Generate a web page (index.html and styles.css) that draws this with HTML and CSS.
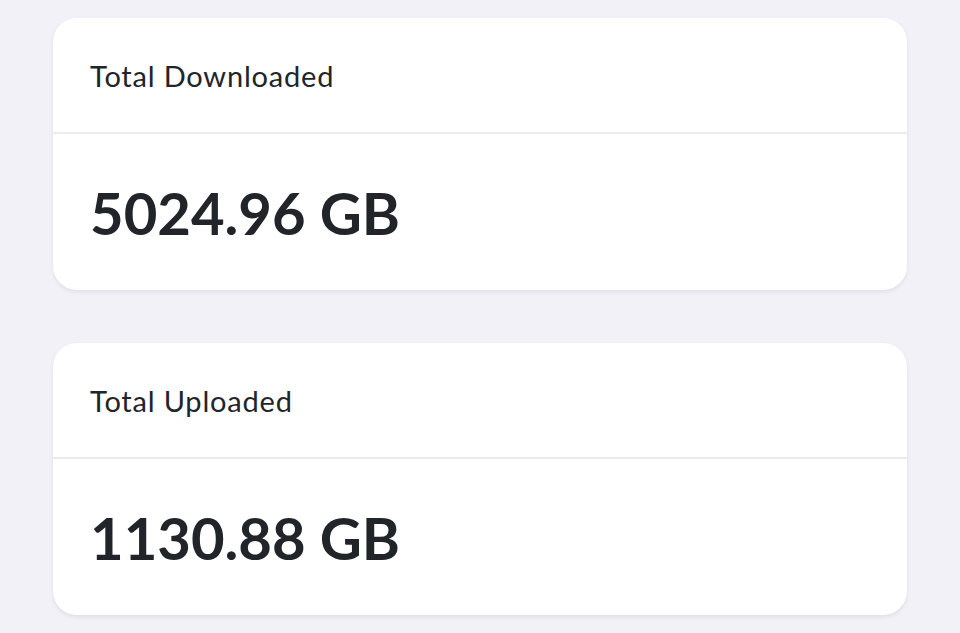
FILE: index.html
```html
<!DOCTYPE html>
<html lang="en">
<head>
  <meta charset="UTF-8">
  <meta name="viewport" content="width=device-width, initial-scale=1.0">
  <title>Transfer Stats</title>
  <link rel="stylesheet" href="styles.css">
</head>
<body>
  <div class="container">
    <div class="card">
      <div class="card-header">Total Downloaded</div>
      <div class="card-body">
        <h2 class="stat">5024.96 GB</h2>
      </div>
    </div>
    <div class="card">
      <div class="card-header">Total Uploaded</div>
      <div class="card-body">
        <h2 class="stat">1130.88 GB</h2>
      </div>
    </div>
  </div>
</body>
</html>
```

FILE: styles.css
```css
body {
  font-family: Lato, "Noto Sans", sans-serif;
  background-color: #f2f1f8;
  color: #212529;
  margin: 0;
  padding: 0;
}

.container {
  display: flex;
  flex-direction: column;
  gap: 53px;
  padding: 18px 53px;
}

.card {
  background-color: #fff;
  border-radius: 24px;
  box-shadow: 0 2px 4px rgba(0, 0, 0, 0.08);
  overflow: hidden;
}

.card-header {
  display: flex;
  align-items: center;
  height: 114px;
  padding: 0 37px;
  font-size: 29px;
  letter-spacing: 0.8px;
  border-bottom: 2px solid #ececf0;
}

.card-body {
  display: flex;
  align-items: center;
  height: 156px;
  padding: 0 37px;
}

.stat {
  margin: 0;
  font-size: 58px;
  font-weight: 700;
}
```
